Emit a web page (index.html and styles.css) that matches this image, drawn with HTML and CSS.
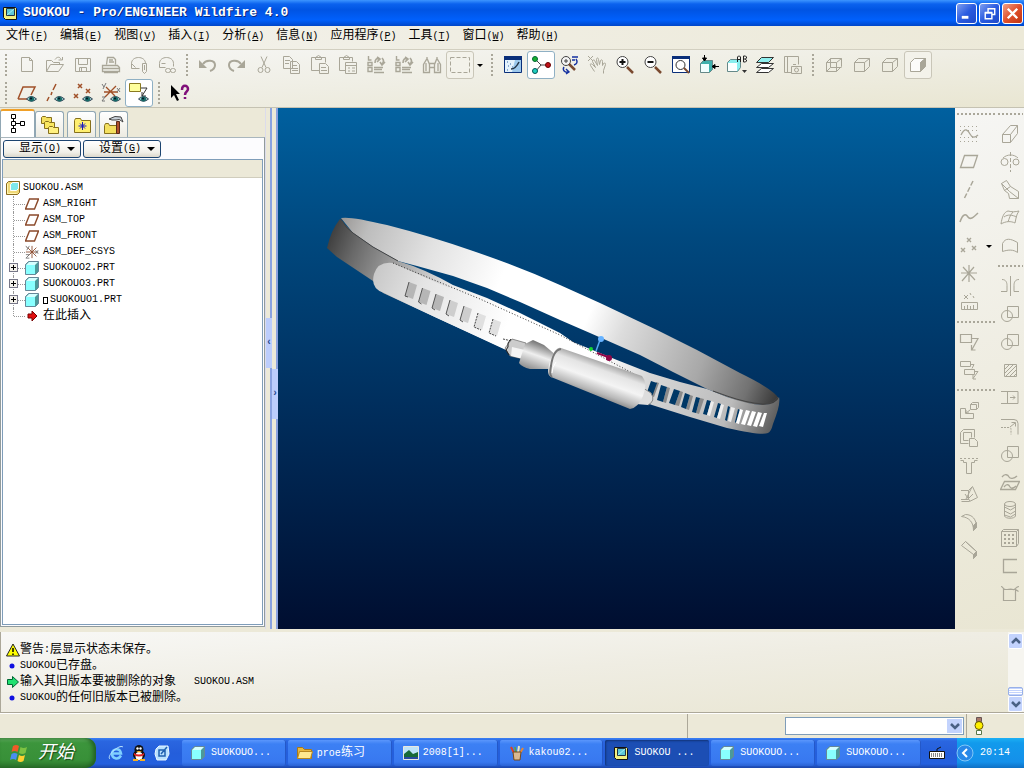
FILE: index.html
```html
<!DOCTYPE html>
<html lang="zh-CN">
<head>
  <meta charset="UTF-8">
  <meta name="viewport" content="width=device-width, initial-scale=1.0">
  <title>SUOKOU - Pro/ENGINEER Wildfire 4.0</title>
  <link rel="stylesheet" href="styles.css">
</head>
<body>
  <!-- icon set -->
  <svg class="defs" aria-hidden="true">
    <symbol id="eye" viewBox="0 0 20 20"><path d="M9.500 16q4.500-5 10 0q-5 4.500-10 0z" fill="#9cc" stroke="#345" /><circle cx="14.500" cy="16" r="2.500" fill="#176a68" stroke="none"/><circle cx="14" cy="15.500" r="1" fill="#012" stroke="none"/></symbol>
    <symbol id="asm" viewBox="0 0 14 14"><path d="M.5 2.500l2-2h11v11l-2 2h-11z" fill="#f0d878" stroke="#8a6a20"/><path d="M4.500 3.500l2-2h6v6l-2 2h-6z" fill="#7fe8ec" stroke="#fff"/><path d="M1.500 3v9.500h9" stroke="#fff6b0"/></symbol>
    <symbol id="app" viewBox="0 0 14 14"><path d="M.5 1.500h12l1 1v11h-11l-2-2z" fill="#f4f080" stroke="#111"/><path d="M3.500 2.500h8v7h-8z" fill="#5cc8d8" stroke="#234"/><path d="M4 9l7-6" stroke="#a8f0f4"/></symbol>
    <symbol id="prt" viewBox="0 0 14 14"><path d="M.5 3.500l3-3h10v10l-3 3h-10z" fill="#4b9a9a" stroke="#689"/><path d="M1 4h9v9h-9z" fill="#8ff" stroke="none"/><path d="M1 4l3-3h9l-3 3z" fill="#d5ffff" stroke="none"/></symbol>
    <symbol id="plane" viewBox="0 0 14 14"><path d="M.5 12l4-10h9l-4 10z" stroke="#8b4a2b" stroke-width="1.400"/></symbol>
    <symbol id="csys" viewBox="0 0 16 16"><path d="M8 1v14M1 8h14M3 3l10 10M13 3l-10 10" stroke="#8b4a2b"/><path d="M1 1l2 3M5 1l-3 5M12 6l3 4M15 6l-3 4M1 11h4l-4 4h4" stroke="#777"/></symbol>
    <symbol id="new" viewBox="0 0 20 20"><path d="M4.500 2.500h8l3 3v11h-11zM12.500 2.500v3h3"/></symbol>
    <symbol id="open" viewBox="0 0 20 20"><path d="M1.500 16.500v-11h5l2 2h6v2M1.500 16.500l4-7h13l-5 7zM10 4.500c2-3 5-3 6 0M17.500 2v3h-4"/></symbol>
    <symbol id="save" viewBox="0 0 20 20"><path d="M2.500 3.500h15v13h-15zM5.500 3.500v6h9v-6M6.500 16.500v-4h7v4M8.500 13v3"/></symbol>
    <symbol id="print" viewBox="0 0 20 20"><path d="M5.500 9.500l1-7h6l2 2v5M8 5h4M8 7h5M1.500 10.500h15l2 2v4h-17zM1.500 13.500h17M3 17.500h14" stroke-width="1.300"/></symbol>
    <symbol id="mail" viewBox="0 0 20 20"><path d="M2.500 13.500v-5c0-8 14-8 14 0M2.500 13.500h8M2.500 8.500l4 4M13.500 8.500h4v8l-2 2-2-2zM15.500 10v5"/></symbol>
    <symbol id="maillink" viewBox="0 0 20 20"><path d="M2.500 12.500v-4c0-8 14-8 14 0v3M2.500 12.500h6M4.500 8.500h4"/><rect x="8.500" y="13.500" width="5" height="4" rx="2"/><rect x="13.500" y="13.500" width="5" height="4" rx="2"/></symbol>
    <symbol id="undo" viewBox="0 0 20 20"><path d="M1 5v8h8z" fill="currentColor" stroke="none"/><path d="M5 9c3-5 12-4 12 1c0 3-2 5-5 6" stroke-width="2"/></symbol>
    <symbol id="redo" viewBox="0 0 20 20"><path d="M19 5v8h-8z" fill="currentColor" stroke="none"/><path d="M15 9c-3-5-12-4-12 1c0 3 2 5 5 6" stroke-width="2"/></symbol>
    <symbol id="cut" viewBox="0 0 20 20"><path d="M7 1.500l5 11M13 1.500l-5 11"/><circle cx="6.500" cy="15" r="2.500"/><circle cx="13.500" cy="15" r="2.500"/></symbol>
    <symbol id="copy" viewBox="0 0 20 20"><path d="M1.500 1.500h6l3 3v9h-9zM3 5.500h5M3 8.500h4M8.500 6.500h6l3 3v9h-9zM10 10.500h5M10 13.500h6M10 15.500h6"/></symbol>
    <symbol id="paste" viewBox="0 0 20 20"><path d="M9.500 15.500h-8v-13h14v5M5.500 4.500v-2l3-2 3 2v2zM9.500 8.500h6l3 3v7h-9zM11 12.500h5M11 15.500h6"/></symbol>
    <symbol id="pastes" viewBox="0 0 20 20"><path d="M7.500 15.500h-6v-13h13v4M5.500 4.500v-2l3-2 3 2v2zM7.500 7.500h11v11h-11zM7.500 10.500h11M10 13h2M14 13h3M10 16h2M14 16h3"/></symbol>
    <symbol id="regen" viewBox="0 0 20 20"><path d="M2.500 1v4h3M2 7.500h4v3h-4zM2 12.500h4v4h-4zM8 12.500h9M8 14.500h8M8 17.500h10" stroke-width="1.400"/><path d="M9 8c0-4 2-5 4-4M16 3c2 2 2 4 0 6M11 2l3 2-3 3M14 7l2 3 3-3" stroke-width="1.600"/></symbol>
    <symbol id="find" viewBox="0 0 20 20"><path d="M1.500 17.500v-8l3-5h1l2 5v8zM18.500 17.500v-8l-3-5h-1l-2 5v8zM7.500 8.500h5v4h-5zM4 8v8M16 8v8M5 2v2M15 2v2" stroke-width="1.300"/></symbol>
    <symbol id="select" viewBox="0 0 20 20"><rect x=".5" y="2.500" width="19" height="15" stroke-dasharray="4 2"/></symbol>
    <symbol id="repaint" viewBox="0 0 20 20"><path d="M1.500 1.500h17v16h-17z" fill="#9cc8ec" stroke="#0a2f7a"/><path d="M1 1h18v4h-18z" fill="#0a2f7a" stroke="none"/><path d="M2 5h10l-3 12h-7z" fill="#e4f2fc" stroke="none"/><path d="M8 14c4 0 6-3 8-7" stroke="#234" stroke-width="1.500"/><path d="M4 7h1M7 9h1M5 11h1M9 12h1M4 15h1" stroke="#36a"/></symbol>
    <symbol id="spin" viewBox="0 0 20 20"><path d="M4 4l6 6M4 17l6-7h7" stroke="#444"/><circle cx="4" cy="4" r="2.500" fill="#19b030" stroke="#063"/><circle cx="4" cy="16" r="2.500" fill="#20d0c0" stroke="#055"/><circle cx="17" cy="10" r="2.500" fill="#c01018" stroke="#600"/></symbol>
    <symbol id="orient" viewBox="0 0 20 20"><circle cx="7" cy="6" r="4.500" fill="#f4f4f4" stroke="#444"/><path d="M5 6h4M7 4v4" stroke="#444"/><path d="M10 9l6 6" stroke="#7a4a30" stroke-width="2.500"/><path d="M13 2h6M13 5h3M17 4c2 3 1 5-2 6M5 12c-2 3 1 6 4 5M7 14l3 3-3 2" stroke="#1430a0" stroke-width="1.400"/></symbol>
    <symbol id="pan" viewBox="0 0 20 20"><path d="M1 1l5 5M6 1l-5 5M7.500 16.500l-4-6c-1-2 1-2 2-1l3 3-3-6c0-2 2-2 2-1l3 5-1-6c0-2 2-2 2 0l1 5 1-4c1-1 2-1 2 1v4l1-2c2-1 2 0 2 1l-2 6v3"/></symbol>
    <symbol id="zoomin" viewBox="0 0 20 20"><circle cx="7.500" cy="7" r="5.500" fill="#fff" stroke="#444"/><path d="M4.500 7h6M7.500 4v6" stroke="#111" stroke-width="2"/><path d="M12 12l6 6" stroke="#7a4a30" stroke-width="2.500"/></symbol>
    <symbol id="zoomout" viewBox="0 0 20 20"><circle cx="7.500" cy="7" r="5.500" fill="#fff" stroke="#444"/><path d="M4.500 7h6" stroke="#111" stroke-width="2"/><path d="M12 12l6 6" stroke="#7a4a30" stroke-width="2.500"/></symbol>
    <symbol id="refit" viewBox="0 0 20 20"><path d="M1.500 1.500h17v16h-17z" fill="#fff" stroke="#0a2f7a"/><path d="M1 1h18v3h-18z" fill="#0a2f7a" stroke="none"/><circle cx="9.500" cy="10" r="4.500" stroke="#333"/><path d="M13 13l5 5" stroke="#7a4a30" stroke-width="2"/></symbol>
    <symbol id="views" viewBox="0 0 20 20"><path d="M1.500 8.500l3-3h9v9l-3 3h-9z" fill="#3fb0ac" stroke="#688"/><path d="M2 9h8v8h-8z" fill="#f2ffff" stroke="none"/><path d="M5.500 0v5M3.500 3l2 3 2-3zM20 11.500h-6M16 9.500l-3 2 3 2z" fill="#000" stroke="#000"/></symbol>
    <symbol id="named" viewBox="0 0 20 20"><path d="M.5 7.500l3-3h10v8l-3 4h-10z" fill="#8ee" stroke="#688"/><path d="M1 8h9v8h-9z" fill="#fbffff" stroke="none"/><path d="M10.500 7v-5l1-1h1l1 1v5M10.500 4.500h3M16.500 7v-6h2l1 1v1l-1 1h-2M18 4l1.500 1v1l-1 1h-2" stroke="#222"/><path d="M15 15h5l-2.500 3z" fill="#333" stroke="none"/></symbol>
    <symbol id="layers" viewBox="0 0 20 20"><path d="M1.500 17.500l5-4h12l-5 4z" fill="#fff" stroke="#333"/><path d="M1.500 12.500l5-4h12l-5 4z" fill="#fff" stroke="#333"/><path d="M1.500 7.500l5-5h12l-5 5z" fill="#8ff0f0" stroke="#333"/></symbol>
    <symbol id="viewmgr" viewBox="0 0 20 20"><path d="M8.500 17.500h-7v-16h14v8M4.500 1.500v16M8.500 11.500h10v7h-10zM10 9.500h3" /><circle cx="13.500" cy="15" r="2"/></symbol>
    <symbol id="wire" viewBox="0 0 20 20"><path d="M2.500 7.500h10v9h-10zM2.500 7.500l4-4h11l-5 4M17.500 3.500v8l-5 5M6.500 3.500v9h11M6.500 12.500l-4 4"/></symbol>
    <symbol id="box" viewBox="0 0 20 20"><path d="M2.500 7.500h10v9h-10zM2.500 7.500l4-4h11l-5 4M17.500 3.500v8l-5 5"/></symbol>
    <symbol id="shade" viewBox="0 0 20 20"><path d="M2.500 7.500l4-4h11l-5 4v9h-10z" fill="#fcfcfa"/><path d="M12.500 7.500l5-4v8l-5 5z" fill="currentColor"/></symbol>
    <symbol id="tplane" viewBox="0 0 20 20"><path d="M1 16l5-12h12l-4 8M1 16h9" stroke="#a05028" stroke-width="1.500"/><use href="#eye"/></symbol>
    <symbol id="taxis" viewBox="0 0 20 20"><path d="M11 1l-3 6M7 9l-1 3M4 14l-2 4" stroke="#a05028" stroke-width="1.500"/><use href="#eye"/></symbol>
    <symbol id="tpoint" viewBox="0 0 20 20"><path d="M5 1l4 4M9 1l-4 4M1 11l4 4M5 11l-4 4M13 6l4 4M17 6l-4 4" stroke="#a05028" stroke-width="1.500"/><use href="#eye"/></symbol>
    <symbol id="tcsys" viewBox="0 0 20 20"><path d="M3 9h14M5 4l9 9M15 3l-11 11" stroke="#a05028" stroke-width="1.300"/><path d="M1 1l2 3M5 0l-3 6M16 5l3 4M19 5l-3 4M1 14h3l-3 4h3" stroke="#777"/><use href="#eye"/></symbol>
    <symbol id="tnote" viewBox="0 0 20 20"><path d="M.5 .5h11v8h-11z" fill="#ffff9c" stroke="#8a7a20"/><path d="M12 5h6l-5 8M13 9v4h4" stroke="#333"/><use href="#eye"/></symbol>
    <symbol id="what" viewBox="0 0 20 20"><path d="M1 2v13l3-3 3 6 2-1-3-6h4z" fill="#000" stroke="none"/><path d="M12 7c0-6 6-5 6-1c0 3-3 2-3 6M15 14v2" stroke="#80107a" stroke-width="2.500"/></symbol>
    <symbol id="sketch" viewBox="0 0 20 20"><path d="M1 2.500h18M1 6.500h18M1 13.500h18M1 17.500h18" stroke-dasharray="1 3"/><path d="M2 11c4-8 7-5 9-1s5 4 8 1" stroke-width="1.300"/></symbol>
    <symbol id="dplane" viewBox="0 0 20 20"><path d="M1.500 15.500l4-12h13l-4 12z" stroke-width="1.300"/></symbol>
    <symbol id="daxis" viewBox="0 0 20 20"><path d="M14 1L5 19" stroke-width="1.500" stroke-dasharray="5 2"/></symbol>
    <symbol id="curve" viewBox="0 0 20 20"><path d="M1 14c3-9 6-8 8-5s5 1 10-4" stroke-width="1.500"/></symbol>
    <symbol id="points" viewBox="0 0 20 20"><path d="M8 2l4 4M12 2l-4 4M2 12l4 4M6 12l-4 4M13 10l4 4M17 10l-4 4" stroke-width="1.400"/></symbol>
    <symbol id="dcsys" viewBox="0 0 20 20"><path d="M10 1v17M2 9h16M4 3l12 13M15 3l-12 14" stroke-width="1.200"/></symbol>
    <symbol id="ruler" viewBox="0 0 20 20"><path d="M2.500 10.500h16v7h-16zM5.500 17v-3M8.500 17v-4M11.500 17v-3M14.500 17v-4M5 3l4 4M9 3l-4 4M11 1l1 2M14 4l1 2"/></symbol>
    <symbol id="annot" viewBox="0 0 20 20"><path d="M1.500 2.500h11v8h-11zM13 6.500h6l-6 11M12.500 13v5h4" stroke-width="1.200"/></symbol>
    <symbol id="annots" viewBox="0 0 20 20"><path d="M1.500 1.500h10v5h-10zM12 4.500h3l-2 4M5.500 9.500h10v5h-10zM16 11.500h3l-5 7M14 15v4h3"/></symbol>
    <symbol id="assem" viewBox="0 0 20 20"><path d="M1.500 8.500h5v5h8v5h-13zM11.500 4.500l2-2h6v5l-2 2h-6zM11.500 4.500h6v5M11 10l-4 3M7 10v3h3"/></symbol>
    <symbol id="create" viewBox="0 0 20 20"><path d="M9.500 15.500h-8v-11l3-3h11v8M4.500 4.500h8v5M4.500 4.500v8h5M10.500 10.500h5l3 3v5h-8z"/></symbol>
    <symbol id="tee" viewBox="0 0 20 20"><path d="M1.500 4.500h3v2h3v11M18.500 4.500h-3v2h-3v11M7.500 17.500h5"/><path d="M1 2.500h18" stroke-dasharray="2 2"/></symbol>
    <symbol id="draft" viewBox="0 0 20 20"><path d="M2 6.500h7.500v9h-7.500M9.500 6.500l4-4 5 11-8 4h-8M13 3l-6 12M6 10l5 7M9 15l5-5"/></symbol>
    <symbol id="round" viewBox="0 0 20 20"><path d="M2.500 4.500l4-2c7 0 11 5 11 13l-3 3c0-8-4-13-12-14z"/><path d="M14.500 18.500l3-3v-5l-3 3z" fill="currentColor"/></symbol>
    <symbol id="chamfer" viewBox="0 0 20 20"><path d="M2.500 5.500l4-4 11 10v4l-3 3v-4zM6.500 1.500v0l11 10-3 3"/><path d="M14.500 18.500l3-3v-4l-3 3z" fill="currentColor"/></symbol>
    <symbol id="extrude" viewBox="0 0 20 20"><path d="M2.500 10.500h8v8h-8zM2.500 10.500l8-9h7v8l-7 9M10.500 10.500l7-9"/></symbol>
    <symbol id="revolve" viewBox="0 0 20 20"><path d="M10.500 0v20" stroke-dasharray="4 2"/><circle cx="4.500" cy="10" r="3.500"/><circle cx="16" cy="10" r="3"/><path d="M3 6c4-4 11-4 15 0"/></symbol>
    <symbol id="blend" viewBox="0 0 20 20"><path d="M1.500 3.500l5-3 4 6 8 5v7h-9l-1-5-4-3zM1.500 3.500l8 8 9 7M10.500 6.500l-6 4"/></symbol>
    <symbol id="boundary" viewBox="0 0 20 20"><path d="M1 16c1-7 3-12 7-13c4 1 7 1 11 0c-3 4-3 8-4 12c-4-2-9-2-14 1zM4 9c4-3 8-2 13 0M13 4c-3 3-4 7-5 10"/></symbol>
    <symbol id="surf" viewBox="0 0 20 20"><path d="M2.500 15.500v-8c3-6 8-5 15-1v10c-4-3-9-3-15-1z"/></symbol>
    <symbol id="mirror" viewBox="0 0 20 20"><path d="M10.500 0v20M2 3.500c4 0 5 3 5 6v6h-6M19 3.500c-4 0-5 3-5 6v6h5"/></symbol>
    <symbol id="merge" viewBox="0 0 20 20"><path d="M7.500 2.500h11v11h-11z"/><circle cx="7" cy="12" r="5.500"/></symbol>
    <symbol id="hatch" viewBox="0 0 20 20"><path d="M4.500 4.500h12v12h-12zM5 9l4-4M5 13l8-8M6 16l10-10M10 16l6-6M14 16l2-2"/></symbol>
    <symbol id="extend" viewBox="0 0 20 20"><path d="M1 3.500h17v12h-17M7.500 3.500v12M10 9.500h5M13 7.500l2 2-2 2"/></symbol>
    <symbol id="offset" viewBox="0 0 20 20"><path d="M1 3.500h13q4 0 4 4v11"/><path d="M1 11.500h8q2 0 2 2v5" stroke-dasharray="2 1"/><path d="M10 11l5-4M11.500 6.500h4v4"/></symbol>
    <symbol id="wave" viewBox="0 0 20 20"><path d="M2 5c3-4 6-2 7 0s5 2 8-1M.5 17.500l4-8h15l-4 8zM4 15c3-4 5-2 6 0s4 1 6-1" stroke-width="1.300"/></symbol>
    <symbol id="cyl" viewBox="0 0 20 20"><ellipse cx="10" cy="4" rx="5.500" ry="2.500"/><path d="M4.500 4v12c1 3 10 3 11 0v-12M4.500 7l6 3 5-3M4.500 11l6 3 5-3M4.500 15l6 2 5-3"/></symbol>
    <symbol id="pattern" viewBox="0 0 20 20"><path d="M1.500 3.500l2-2h15v14l-2 3h-15zM1.500 3.500h15v15M16.500 3.500l2-2"/><path d="M4 7h2M8 7h2M12 7h2M4 11h2M8 11h2M12 11h2M4 15h2M8 15h2M12 15h2" stroke-width="2"/></symbol>
    <symbol id="edge" viewBox="0 0 20 20"><path d="M17 3.500h-13.500v13h13.500" stroke-width="1.300"/></symbol>
    <symbol id="flex" viewBox="0 0 20 20"><path d="M3.500 5.500h12v11h-12zM1 2.500c2 0 2 3 5 3s5-1 7 0 3-3 6-3M15.500 5.500l3 2" stroke-width="1.200"/></symbol>
    <symbol id="chevdown" viewBox="0 0 10 8"><path d="M1 2l4 4 4-4" stroke="#4a6185" stroke-width="2.500"/></symbol>
    <symbol id="chevup" viewBox="0 0 10 8"><path d="M1 6l4-4 4 4" stroke="#4a6185" stroke-width="2.500"/></symbol>
  </svg>

  <header class="titlebar">
    <svg class="ico14"><use href="#app"/></svg>
    <h1>SUOKOU - Pro/ENGINEER Wildfire 4.0</h1>
    <button class="win" aria-label="最小化"><svg viewBox="0 0 20 20"><path d="M5 14h7" stroke-width="3"/></svg></button>
    <button class="win" aria-label="还原"><svg viewBox="0 0 20 20"><path d="M5.500 9.500h7v6h-7zM5 9h8M8.500 9v-4h7v6h-3M8 5h8" stroke-width="1.500"/></svg></button>
    <button class="win close" aria-label="关闭"><svg viewBox="0 0 20 20"><path d="M5 5l10 10M15 5l-10 10" stroke-width="2.500"/></svg></button>
  </header>

  <nav class="menubar">
    <button>文件<span class="key">(<u>F</u>)</span></button>
    <button>编辑<span class="key">(<u>E</u>)</span></button>
    <button>视图<span class="key">(<u>V</u>)</span></button>
    <button>插入<span class="key">(<u>I</u>)</span></button>
    <button>分析<span class="key">(<u>A</u>)</span></button>
    <button>信息<span class="key">(<u>N</u>)</span></button>
    <button>应用程序<span class="key">(<u>P</u>)</span></button>
    <button>工具<span class="key">(<u>T</u>)</span></button>
    <button>窗口<span class="key">(<u>W</u>)</span></button>
    <button>帮助<span class="key">(<u>H</u>)</span></button>
  </nav>

  <div class="toolbars">
    <div class="toolbar">
      <span class="grip"></span>
      <button class="tool" aria-label="新建"><svg><use href="#new"/></svg></button>
      <button class="tool" aria-label="打开"><svg><use href="#open"/></svg></button>
      <button class="tool" aria-label="保存"><svg><use href="#save"/></svg></button>
      <button class="tool" aria-label="打印"><svg><use href="#print"/></svg></button>
      <button class="tool" aria-label="发送附件"><svg><use href="#mail"/></svg></button>
      <button class="tool" aria-label="发送链接"><svg><use href="#maillink"/></svg></button>
      <span class="grip"></span>
      <button class="tool" aria-label="撤消"><svg><use href="#undo"/></svg></button>
      <button class="tool" aria-label="重做"><svg><use href="#redo"/></svg></button>
      <button class="tool" aria-label="剪切"><svg><use href="#cut"/></svg></button>
      <button class="tool" aria-label="复制"><svg><use href="#copy"/></svg></button>
      <button class="tool" aria-label="粘贴"><svg><use href="#paste"/></svg></button>
      <button class="tool" aria-label="选择性粘贴"><svg><use href="#pastes"/></svg></button>
      <button class="tool" aria-label="再生"><svg><use href="#regen"/></svg></button>
      <button class="tool" aria-label="再生管理器"><svg><use href="#regen"/></svg></button>
      <button class="tool" aria-label="查找"><svg><use href="#find"/></svg></button>
      <button class="tool framed" aria-label="选取"><svg><use href="#select"/></svg></button>
      <button class="drop" aria-label="选取方式"></button>
      <span class="grip"></span>
      <button class="tool" aria-label="重画"><svg><use href="#repaint"/></svg></button>
      <button class="tool on" aria-label="旋转中心"><svg><use href="#spin"/></svg></button>
      <button class="tool" aria-label="定向模式"><svg><use href="#orient"/></svg></button>
      <button class="tool" aria-label="平移"><svg><use href="#pan"/></svg></button>
      <button class="tool" aria-label="放大"><svg><use href="#zoomin"/></svg></button>
      <button class="tool" aria-label="缩小"><svg><use href="#zoomout"/></svg></button>
      <button class="tool" aria-label="重新调整"><svg><use href="#refit"/></svg></button>
      <button class="tool" aria-label="重定向"><svg><use href="#views"/></svg></button>
      <button class="tool" aria-label="视图列表"><svg><use href="#named"/></svg></button>
      <button class="tool" aria-label="层"><svg><use href="#layers"/></svg></button>
      <button class="tool" aria-label="视图管理器"><svg><use href="#viewmgr"/></svg></button>
      <span class="grip"></span>
      <button class="tool" aria-label="线框"><svg><use href="#wire"/></svg></button>
      <button class="tool" aria-label="隐藏线"><svg><use href="#box"/></svg></button>
      <button class="tool" aria-label="无隐藏线"><svg><use href="#box"/></svg></button>
      <button class="tool framed" aria-label="着色"><svg><use href="#shade"/></svg></button>
    </div>
    <div class="toolbar">
      <span class="grip"></span>
      <button class="tool" aria-label="基准平面开关"><svg><use href="#tplane"/></svg></button>
      <button class="tool" aria-label="基准轴开关"><svg><use href="#taxis"/></svg></button>
      <button class="tool" aria-label="基准点开关"><svg><use href="#tpoint"/></svg></button>
      <button class="tool" aria-label="坐标系开关"><svg><use href="#tcsys"/></svg></button>
      <button class="tool on" aria-label="注释开关"><svg><use href="#tnote"/></svg></button>
      <span class="grip"></span>
      <button class="tool" aria-label="上下文帮助"><svg><use href="#what"/></svg></button>
    </div>
  </div>

  <main class="work">
    <aside class="navigator">
      <div class="tabs">
        <button class="tab active" aria-label="模型树"><svg viewBox="0 0 20 20"><path d="M3.500 1.500h4v4h-4zM3.500 8.500h4v4h-4zM3.500 15.500h4v4h-4zM12.500 8.500h4v4h-4zM5.500 6v2M5.500 13v2M8 10.500h4" stroke="#000"/></svg></button>
        <button class="tab" aria-label="文件夹浏览器"><svg viewBox="0 0 20 20"><path d="M1.500 2.500l1-1h3l1 1h5v6h-10z" fill="#f4e060" stroke="#86701c"/><path d="M4.500 7.500l1-1h3l1 1h5v6h-10z" fill="#fae860" stroke="#86701c"/><path d="M8.500 12.500l1-1h3l1 1h5v6h-10z" fill="#fff080" stroke="#86701c"/></svg></button>
        <button class="tab" aria-label="收藏夹"><svg viewBox="0 0 20 20"><path d="M2.500 5.500l1-2h5l1 2h9v12h-16z" fill="#ffef70" stroke="#86701c"/><path d="M10.500 7v8M6.500 11h8M8 8.500l5 5M13 8.500l-5 5" stroke="#1818c0"/></svg></button>
        <button class="tab" aria-label="连接"><svg viewBox="0 0 20 20"><path d="M.5 10.500l1-2h3l1 2h7v8h-12z" fill="#f4e060" stroke="#86701c"/><path d="M5 4q6-4 12-2l2 5q-4-4-7-2h-4z" fill="#c8d0d8" stroke="#444"/><path d="M12.500 6.500h3v12h-3z" fill="#b0502c" stroke="#5a2a18"/></svg></button>
      </div>
      <div class="panel">
        <div class="panel-buttons">
          <button>显示<span class="key">(<u>O</u>)</span><i class="caret"></i></button>
          <button>设置<span class="key">(<u>G</u>)</span><i class="caret"></i></button>
        </div>
        <div class="tree">
          <div class="tree-head"></div>
          <div class="root"><svg class="ico14"><use href="#asm"/></svg><span>SUOKOU.ASM</span></div>
          <ul>
            <li><span class="branch"></span><svg class="ico14"><use href="#plane"/></svg><span>ASM_RIGHT</span></li>
            <li><span class="branch"></span><svg class="ico14"><use href="#plane"/></svg><span>ASM_TOP</span></li>
            <li><span class="branch"></span><svg class="ico14"><use href="#plane"/></svg><span>ASM_FRONT</span></li>
            <li><span class="branch"></span><svg class="ico14"><use href="#csys"/></svg><span>ASM_DEF_CSYS</span></li>
            <li><span class="branch"><button class="plus" aria-label="展开"></button></span><svg class="ico14"><use href="#prt"/></svg><span>SUOKOUO2.PRT</span></li>
            <li><span class="branch"><button class="plus" aria-label="展开"></button></span><svg class="ico14"><use href="#prt"/></svg><span>SUOKOUO3.PRT</span></li>
            <li><span class="branch"><button class="plus" aria-label="展开"></button></span><svg class="ico14"><use href="#prt"/></svg><i class="mark"></i><span>SUOKOUO1.PRT</span></li>
            <li><span class="branch"></span><svg class="ico14" viewBox="0 0 14 14"><path d="M3 5h4v-3l5 5-5 5v-3h-4z" fill="#e01010" stroke="#700"/></svg><span class="zh">在此插入</span></li>
          </ul>
        </div>
      </div>
    </aside>

    <div class="splitter">
      <div class="rail"><button aria-label="收起">‹</button></div>
      <div class="rail right"><button aria-label="展开">›</button></div>
    </div>

    <section class="viewport">
      <svg viewBox="278 108 677 521" role="img" aria-label="模型">
        <defs>
          <linearGradient id="backBand" gradientUnits="userSpaceOnUse" x1="341" y1="220" x2="779" y2="400">
            <stop offset="0" stop-color="#9a9896"/><stop offset=".06" stop-color="#bdbdbd"/><stop offset=".2" stop-color="#e2e2e2"/><stop offset=".36" stop-color="#fff"/><stop offset=".56" stop-color="#fff"/><stop offset=".64" stop-color="#dcdcdc"/><stop offset=".82" stop-color="#a8a8a8"/><stop offset=".93" stop-color="#727272"/><stop offset="1" stop-color="#333"/>
          </linearGradient>
          <linearGradient id="frontBand" gradientUnits="userSpaceOnUse" x1="328" y1="235" x2="779" y2="415">
            <stop offset="0" stop-color="#3c3c3c"/><stop offset=".06" stop-color="#686868"/><stop offset=".14" stop-color="#999"/><stop offset=".28" stop-color="#ececec"/><stop offset=".4" stop-color="#fff"/><stop offset=".62" stop-color="#fff"/><stop offset=".72" stop-color="#d8d8d8"/><stop offset=".9" stop-color="#bbb"/><stop offset="1" stop-color="#5a5a5a"/>
          </linearGradient>
          <linearGradient id="tongue" gradientUnits="userSpaceOnUse" x1="373" y1="275" x2="505" y2="330">
            <stop offset="0" stop-color="#c8c8c8"/><stop offset=".35" stop-color="#e4e4e4"/><stop offset="1" stop-color="#fff"/>
          </linearGradient>
          <linearGradient id="barrel" gradientUnits="userSpaceOnUse" x1="607" y1="360" x2="592" y2="402">
            <stop offset="0" stop-color="#8c8c8c"/><stop offset=".25" stop-color="#e4e4e4"/><stop offset=".5" stop-color="#f4f4f4"/><stop offset=".75" stop-color="#b8b8b8"/><stop offset="1" stop-color="#5c5c5c"/>
          </linearGradient>
          <linearGradient id="cone" gradientUnits="userSpaceOnUse" x1="542" y1="343" x2="532" y2="371">
            <stop offset="0" stop-color="#707070"/><stop offset=".45" stop-color="#efefef"/><stop offset="1" stop-color="#8a8a8a"/>
          </linearGradient>
        </defs>
        <!-- far side of the band -->
        <path fill="url(#backBand)" d="M341 218Q350 216 387 225Q430 236 473 251Q520 267 560 285L600 303L657 330L697 350L740 373Q775 390 779 399Q776 405 763 405Q747 405 727 397L707 389L673 372L640 355L590 333L560 320L520 302L487 288L453 276L417 266L398 261L373 247L353 233z"/>
        <!-- near side of the band -->
        <path fill="url(#frontBand)" d="M340 219L353 233L373 247L398 261Q425 269 453 285L487 298L520 313L560 333L573 342L617 360L650 373L680 382L707 389L727 397Q747 404 763 405Q777 404 779 397Q781 404 773 424Q771 432 768 433Q762 436 727 428L690 417L652 405L505 349L437 318L383 293L373 281L337 257L327 248Q331 230 340 219z"/>
        <path fill="none" stroke="#444" d="M341 219Q345 228 353 233L373 247L398 261M713 391L727 396Q747 403 763 404Q775 403 778 397"/>
        <path fill="url(#tongue)" d="M393 263Q378 261 374 274Q370 289 384 293L437 318L506 350L560 350L573 342L480 302z"/>
        <path fill="none" stroke="#333" stroke-dasharray="1 2" d="M393 263L480 299L560 335L640 377"/>
        <path fill="#b6b6b6" d="M409 282l8 3-4 14-8-3zM422.500 288l8 3-4 14-8-3zM436 294l8 3-4 14-8-3z"/>
        <path fill="#cecece" d="M450 300l8 3-4 14-8-3zM464 306l8 3-4 14-8-3z"/>
        <path fill="#e0e0e0" d="M478 313l8 3-4 14-8-3zM493 319l8 3-4 14-8-3z"/>
        <path fill="none" stroke="#555" d="M409 282l-4 14 3 1M422.500 288l-4 14 3 2M436 294l-4 14 3 2M450 300l-4 14 3 2M464 306l-4 14 3 2"/>
        <path fill="none" stroke="#444" stroke-dasharray="2 1" d="M478 313l-4 14 7 3M493 319l-4 14 7 3M503 339l9 2"/>
        <path fill="#8a8a8a" d="M656 382l3 1-5 14-3-1zM667 387l3 1-4 15-3-1zM680 391l3 1-4 14-4-1zM690 395l3 1-4 14-3-1zM700 398l4 1-5 15-3-1z"/>
        <path fill="#003866" d="M651 381l6 2-5 14-6-2zM661 385l6 2-4 15-6-2zM674 389l6 2-5 14-6-2zM685 393l5 2-4 14-5-2zM696 397l4 1-4 15-4-1zM707 400l4 1-4 14-4-1zM718 403l3 1-4 14-3-1zM728 406l2 1-3 14-2-1zM738 409l2 1-4 13-1-1z"/>
        <path fill="#ededed" d="M711 401l3 1-4 14-3-1zM721 404l3 1-4 14-3-1zM731 407l4 1-4 14-3-1z"/>
        <path fill="#fff" d="M740 409l3 1-4 14-3-1zM746 410l4 1-5 14-4-1zM752 411l4 1-5 14-4-1zM758 412l4 1-5 14-4-1zM764 413l3 0-4 14-4-1z"/>
        <!-- screw and housing -->
        <path fill="#ccc" stroke="#666" stroke-width=".7" d="M505 348L512 339L526 343L523 359L510 356z"/>
        <path fill="#f4f4f4" d="M512 347l13 3-2 9-12-3z"/>
        <path fill="none" stroke="#222" d="M511 339l-3 4v4l-2 3 3 5"/>
        <path fill="url(#cone)" d="M525 344L533 340L544 345L557 356L555 368L551 369L530 369Q522 367 519 363z"/>
        <path fill="#ddd" d="M643 387L651 393Q656 401 648 405L636 404z"/>
        <path fill="none" stroke="#888" d="M643 388L651 393Q656 401 648 405"/>
        <path fill="url(#barrel)" d="M561 348L642 376Q648 383 643 396Q638 408 630 409L551 377Q545 374 551 359Q556 346 561 348z"/>
        <path fill="none" stroke="#777" stroke-width="2" d="M561 349Q553 350 551 366Q549 375 552 377"/>
        <path fill="none" stroke="#fff" d="M556 362q-4 5-4 11"/>
        <!-- spin centre -->
        <path fill="none" stroke="#55aaf4" stroke-width="1.500" d="M600 340L596 351"/>
        <path fill="none" stroke="#900848" stroke-width="2" d="M597 353L608 357"/>
        <path fill="none" stroke="#fff" d="M591 350L596 353"/>
        <circle cx="601" cy="339" r="3" fill="#66b2ff"/>
        <circle cx="591" cy="349" r="2" fill="#18d830"/>
        <circle cx="609" cy="358" r="3" fill="#900848"/>
      </svg>
    </section>

    <div class="sidebars">
      <div class="sidebar">
        <span class="grip wide"></span>
        <button class="tool" aria-label="草绘"><svg><use href="#sketch"/></svg></button>
        <button class="tool" aria-label="平面"><svg><use href="#dplane"/></svg></button>
        <button class="tool" aria-label="轴"><svg><use href="#daxis"/></svg></button>
        <button class="tool" aria-label="曲线"><svg><use href="#curve"/></svg></button>
        <div class="split-tool">
          <button class="tool" aria-label="点"><svg><use href="#points"/></svg></button>
          <button class="drop" aria-label="点类型"></button>
        </div>
        <button class="tool" aria-label="坐标系"><svg><use href="#dcsys"/></svg></button>
        <button class="tool" aria-label="分析特征"><svg><use href="#ruler"/></svg></button>
        <span class="grip wide"></span>
        <button class="tool" aria-label="注释"><svg><use href="#annot"/></svg></button>
        <button class="tool" aria-label="注释传播"><svg><use href="#annots"/></svg></button>
        <span class="grip wide"></span>
        <button class="tool" aria-label="装配"><svg><use href="#assem"/></svg></button>
        <button class="tool" aria-label="创建"><svg><use href="#create"/></svg></button>
        <button class="tool" aria-label="孔"><svg><use href="#tee"/></svg></button>
        <button class="tool" aria-label="拔模"><svg><use href="#draft"/></svg></button>
        <button class="tool" aria-label="倒圆角"><svg><use href="#round"/></svg></button>
        <button class="tool" aria-label="倒角"><svg><use href="#chamfer"/></svg></button>
      </div>
      <div class="sidebar narrow">
        <span class="grip wide"></span>
        <button class="tool" aria-label="拉伸"><svg><use href="#extrude"/></svg></button>
        <button class="tool" aria-label="旋转"><svg><use href="#revolve"/></svg></button>
        <button class="tool" aria-label="混合"><svg><use href="#blend"/></svg></button>
        <button class="tool" aria-label="边界混合"><svg><use href="#boundary"/></svg></button>
        <button class="tool" aria-label="造型"><svg><use href="#surf"/></svg></button>
        <span class="grip wide"></span>
        <button class="tool" aria-label="镜像"><svg><use href="#mirror"/></svg></button>
        <button class="tool" aria-label="合并"><svg><use href="#merge"/></svg></button>
        <button class="tool" aria-label="修剪"><svg><use href="#merge"/></svg></button>
        <button class="tool" aria-label="填充"><svg><use href="#hatch"/></svg></button>
        <button class="tool" aria-label="延伸"><svg><use href="#extend"/></svg></button>
        <button class="tool" aria-label="偏移"><svg><use href="#offset"/></svg></button>
        <button class="tool" aria-label="相交"><svg><use href="#merge"/></svg></button>
        <button class="tool" aria-label="投影"><svg><use href="#wave"/></svg></button>
        <button class="tool" aria-label="包络"><svg><use href="#cyl"/></svg></button>
        <button class="tool" aria-label="阵列"><svg><use href="#pattern"/></svg></button>
        <button class="tool" aria-label="加厚"><svg><use href="#edge"/></svg></button>
        <button class="tool" aria-label="实体化"><svg><use href="#flex"/></svg></button>
      </div>
    </div>
  </main>

  <section class="messages">
    <div class="log">
      <p class="zh"><svg viewBox="0 0 14 14"><path d="M7 1L13.500 13H.5z" fill="#ff0" stroke="#222"/><path d="M7 5v4M7 10.500v1.500" stroke="#000" stroke-width="1.500"/></svg>警告<span class="lat">:</span>层显示状态未保存。</p>
      <p class="zh"><svg viewBox="0 0 14 14"><circle cx="6" cy="7" r="2.500" fill="#1010e0" stroke="none"/></svg><span class="lat">SUOKOU</span>已存盘。</p>
      <p class="zh"><svg viewBox="0 0 14 14"><path d="M1.500 4.500h5v-3l6 5.500-6 5.500v-3h-5z" fill="#20e070" stroke="#063"/></svg>输入其旧版本要被删除的对象<span class="lat answer">SUOKOU.ASM</span></p>
      <p class="zh"><svg viewBox="0 0 14 14"><circle cx="6" cy="7" r="2.500" fill="#1010e0" stroke="none"/></svg><span class="lat">SUOKOU</span>的任何旧版本已被删除。</p>
    </div>
    <div class="scrollbar">
      <button aria-label="向上"><svg><use href="#chevup"/></svg></button>
      <span class="thumb"></span>
      <button aria-label="向下"><svg><use href="#chevdown"/></svg></button>
    </div>
  </section>

  <footer class="statusbar">
    <div class="status-text"></div>
    <div class="filter">
      <select aria-label="选取过滤器"><option></option></select>
      <svg><use href="#chevdown"/></svg>
    </div>
    <div class="lamp"><svg viewBox="0 0 12 20"><path d="M3.500 1.500h5v4h-5z" fill="#a87868" stroke="#655"/><circle cx="6" cy="9.500" r="4" fill="#fff000" stroke="#665500"/><path d="M3.500 14.500h5v4h-5z" fill="#fff" stroke="#587848"/></svg></div>
  </footer>

  <div class="taskbar">
    <button class="start">
      <svg viewBox="0 0 20 18"><path d="M3 2q3-2 6 0l-1.500 6q-3-2-6 0z" fill="#f05a28"/><path d="M10.500 3q3 2 6.500 0l-1.500 6q-3 2-6.500 0z" fill="#7dc242"/><path d="M1.500 10q3-2 6 0l-1.500 6q-3-2-6 0z" fill="#4a8ef0"/><path d="M9 11q3 2 6 0l-1.500 6q-3 2-6 0z" fill="#ffd030"/></svg>
      <span>开始</span>
    </button>
    <div class="quick">
      <button aria-label="Internet Explorer"><svg viewBox="0 0 16 16"><path d="M13 10.500c-3 5-9 3-9-2s8-6 9 0h-8" stroke="#7fd0ff" stroke-width="2.500"/><path d="M2 14c-4-3 9-15 13-12" stroke="#bfe8ff"/></svg></button>
      <button aria-label="QQ"><svg viewBox="0 0 16 16"><ellipse cx="8" cy="10" rx="6" ry="5" fill="#111"/><circle cx="8" cy="4.500" r="4.500" fill="#111"/><ellipse cx="8" cy="11" rx="3.500" ry="4" fill="#fff"/><path d="M3 8q5 3 10 0v2q-5 3-10 0z" fill="#e02020"/><circle cx="6.500" cy="3.500" r="1.200" fill="#fff"/><circle cx="9.500" cy="3.500" r="1.200" fill="#fff"/><path d="M5 6h6l-3 1.500zM2 14h5v2h-5zM9 14h5v2h-5z" fill="#f8b020"/></svg></button>
      <button aria-label="显示桌面"><svg viewBox="0 0 16 16"><path d="M2 4l3-3h9l1 8-3 6h-9l-2-6z" fill="#b8e0ff" stroke="#e8f6ff"/><path d="M5 5h6v6h-6zM7 9l6-7" stroke="#2060b0" stroke-width="1.500"/></svg></button>
    </div>
    <div class="tasks">
      <button><svg class="ico14"><use href="#prt"/></svg>SUOKOUO...</button>
      <button><svg viewBox="0 0 16 16"><path d="M.5 13.500v-11h5l2 2h7v9z" fill="#e8b840" stroke="#a87818"/><path d="M.5 13.500l2-7h13l-2 7z" fill="#ffe890" stroke="#b88820"/></svg><span>proe<span class="zh">练习</span></span></button>
      <button><svg viewBox="0 0 16 16"><path d="M.5 1.500h15v13h-15z" fill="#bde4fa" stroke="#e8e8e0"/><path d="M1 9l5-4 4 4 5-2v7h-14z" fill="#186a38"/><path d="M1 12h14v2h-14z" fill="#284aa0"/></svg>2008[1]...</button>
      <button><svg viewBox="0 0 16 16"><path d="M5 8L2 2" stroke="#e04020" stroke-width="2"/><path d="M7 8L6 2" stroke="#58a838" stroke-width="1.500"/><path d="M9 8l1-7" stroke="#e8e8c0" stroke-width="2"/><path d="M11 8l3-5" stroke="#e88830" stroke-width="2"/><path d="M4 7h8l-1 8h-6z" fill="#d8b890" stroke="#764818"/></svg>kakou02...</button>
      <button class="current"><svg class="ico14"><use href="#app"/></svg>SUOKOU ...</button>
      <button><svg class="ico14"><use href="#prt"/></svg>SUOKOUO...</button>
      <button><svg class="ico14"><use href="#prt"/></svg>SUOKOUO...</button>
    </div>
    <button class="ime" aria-label="输入法"><svg viewBox="0 0 16 16"><path d="M.5 6.500h15v7h-15z" fill="#fff" stroke="#111"/><path d="M2 9h12M2 11h12" stroke="#111" stroke-dasharray="1 1"/><path d="M8 6V4l4-2" stroke="#111"/></svg></button>
    <div class="tray">
      <button class="expand" aria-label="显示隐藏的图标"><svg viewBox="0 0 18 18"><circle cx="9" cy="9" r="8" fill="#2888e8" stroke="#80c8f8"/><path d="M11 5L7 9l4 4" stroke="#fff" stroke-width="2"/></svg></button>
      <time>20:14</time>
    </div>
  </div>
</body>
</html>
```
FILE: styles.css
```css
* {
  box-sizing: border-box;
}
body {
  margin: 0;
  height: 100vh;
  display: flex;
  flex-direction: column;
  overflow: hidden;
  background: #ece9d8;
  color: #000;
  font-family: "Liberation Mono", "Noto Sans CJK SC", monospace;
  font-size: 10px;
  line-height: 16px;
}
button {
  margin: 0;
  padding: 0;
  border: 0;
  background: none;
  color: inherit;
  font: inherit;
}
svg {
  display: block;
  flex: none;
  fill: none;
  stroke: currentColor;
}
.defs {
  position: absolute;
  width: 0;
  height: 0;
}
.zh {
  font-size: 12px;
}
.key,
.lat {
  font-size: 10px;
}
.ico14 {
  width: 14px;
  height: 14px;
}

/* title bar */
.titlebar {
  display: flex;
  align-items: center;
  height: 26px;
  padding: 0 1px 0 3px;
  gap: 2px;
  color: #fff;
  background: linear-gradient(#3d95ff 0, #0b62ee 4px, #0054e3 10px, #0060fc 20px, #0046c8 26px);
}
.titlebar h1 {
  flex: 1;
  margin: 0 0 0 4px;
  font-size: 13px;
  font-weight: bold;
  text-shadow: 1px 1px #0a2a80;
}
.win {
  width: 21px;
  height: 21px;
  border: 1px solid #fff;
  border-radius: 3px;
  background: linear-gradient(135deg, #7f9ff0, #2a5be0 50%, #1f49c8);
}
.win.close {
  background: linear-gradient(135deg, #f0a088, #e0502c 50%, #c03410);
}

/* menu */
.menubar {
  display: flex;
  align-items: center;
  gap: 12px;
  height: 24px;
  padding: 0 6px 2px;
  border-bottom: 1px solid #d2cfc0;
  background: linear-gradient(to right, #f3f2ec, #ece9d8);
  font-size: 12px;
}

/* toolbars */
.toolbars {
  padding-top: 1px;
  border-bottom: 1px solid #c5c2b2;
  background: linear-gradient(to bottom right, #f6f6f4, #efeee4 50%, #e9e6d2);
}
.toolbar {
  display: flex;
  height: 28px;
}
.grip {
  display: block;
  width: 13px;
  margin: 3px 0;
  background: repeating-linear-gradient(#aaa79a 0 2px, transparent 2px 4px) 5px 0 / 2px 100% no-repeat;
}
.grip.wide {
  width: auto;
  height: 12px;
  margin: 0 1px 0 2px;
  background: repeating-linear-gradient(to right, #aaa79a 0 2px, transparent 2px 4px) 0 5px / 100% 2px no-repeat;
}
.tool {
  display: flex;
  flex: none;
  align-items: center;
  justify-content: center;
  width: 28px;
  height: 28px;
  color: #a9a698;
}
.tool svg {
  width: 20px;
  height: 20px;
}
.tool.framed,
.tool.on {
  border: 1px solid #c9c6b8;
  border-radius: 3px;
}
.tool.framed {
  background: #f3f2ea;
}
.tool.on {
  border-color: #8fb0c4;
  background: #fff;
}
.drop {
  display: flex;
  align-items: center;
  justify-content: center;
  width: 12px;
}
.drop::before,
.caret {
  content: "";
  border: 3px solid transparent;
  border-top-color: #000;
  border-bottom-width: 0;
}

/* main area */
.work {
  display: flex;
  flex: 1;
  min-height: 0;
}
.navigator {
  display: flex;
  flex-direction: column;
  width: 265px;
  padding-top: 1px;
}
.tabs {
  display: flex;
  align-items: flex-end;
  gap: 3px;
  height: 28px;
}
.tab {
  display: flex;
  align-items: center;
  justify-content: center;
  width: 29px;
  height: 26px;
  border: 1px solid #91a7b4;
  border-bottom: 0;
  border-radius: 3px 3px 0 0;
  background: linear-gradient(#fff, #edebe2);
}
.tab svg {
  width: 20px;
  height: 20px;
}
.tab.active {
  width: 35px;
  height: 28px;
  margin-right: -3px;
  padding-bottom: 3px;
  border-top: 2px solid #f0a028;
  background: #fff;
}
.panel {
  display: flex;
  flex: 1;
  flex-direction: column;
  margin-bottom: 2px;
  border: 1px solid #919b9c;
  border-top-color: #a9b6bd;
  background: #fcfcfe;
}
.panel-buttons {
  display: flex;
  gap: 2px;
  padding: 2px 2px 1px;
}
.panel-buttons button {
  display: flex;
  align-items: center;
  justify-content: center;
  width: 78px;
  height: 18px;
  padding-left: 10px;
  border: 1px solid #1c4470;
  border-radius: 3px;
  background: linear-gradient(#fff, #f0efe8 70%, #dcd8cc);
  font-size: 12px;
}
.caret {
  margin-left: 6px;
  border-width: 4px 4px 0;
}
.tree {
  flex: 1;
  margin: 0 1px 1px;
  border: 1px solid #7f9db9;
  background: #fff;
}
.tree-head {
  height: 18px;
  margin-bottom: 2px;
  border-bottom: 1px solid #d0cdbd;
  background: #ece9d8;
}
.root,
.tree li {
  display: flex;
  align-items: center;
  height: 16px;
}
.root {
  gap: 3px;
  padding-left: 3px;
}
.tree ul {
  margin: 0;
  padding: 0 0 0 10px;
  list-style: none;
}
.tree li .ico14 {
  margin-right: 4px;
}
.branch {
  position: relative;
  width: 12px;
  height: 16px;
  border-left: 1px dotted #999;
}
.branch::before {
  content: "";
  display: block;
  height: 8px;
  border-bottom: 1px dotted #999;
}
.tree li:last-child .branch {
  height: 8px;
  align-self: flex-start;
}
.plus {
  position: absolute;
  left: -5px;
  top: 3px;
  width: 9px;
  height: 9px;
  border: 1px solid #778;
  background:
    linear-gradient(#000, #000) 1px 3px / 5px 1px no-repeat,
    linear-gradient(#000, #000) 3px 1px / 1px 5px no-repeat,
    #f4f2ec;
}
.mark {
  width: 5px;
  height: 7px;
  margin-right: 2px;
  border: 1px solid #000;
}

.splitter {
  display: flex;
  width: 13px;
  padding-left: 1px;
  background: #dcdcec;
}
.rail {
  display: flex;
  flex: 1;
  flex-direction: column;
  justify-content: center;
  padding-bottom: 52px;
  border-right: 2px solid #8aa2e0;
  background: #ece9d8;
}
.rail.right {
  padding: 50px 0 0;
}
.rail button {
  height: 50px;
  margin-right: -2px;
  background: #bccdfc;
  color: #24468c;
  font-weight: bold;
}

.viewport {
  flex: 1;
  min-width: 0;
  background: linear-gradient(#00609f, #00487e 25%, #002c5a 60%, #000e30);
}
.viewport svg {
  width: 100%;
  height: 100%;
  stroke: none;
}

.sidebars {
  display: flex;
  width: 69px;
  background: linear-gradient(160deg, #f6f6f4, #efede2 50%, #e9e6d3);
}
.sidebar {
  width: 41px;
}
.sidebar.narrow {
  width: 28px;
}
.split-tool {
  display: flex;
}

/* message log */
.messages {
  display: flex;
  height: 81px;
  margin-top: 3px;
  border-left: 1px solid #aca899;
  border-bottom: 1px solid #aca899;
  background: linear-gradient(to bottom right, #f8f8f6, #efede3 50%, #e9e6d3);
}
.log {
  flex: 1;
  padding: 10px 6px 0 5px;
}
.log p {
  display: flex;
  align-items: center;
  height: 16px;
  margin: 0;
}
.log svg {
  width: 14px;
  height: 14px;
}
.answer {
  margin-left: 18px;
}
.scrollbar {
  display: flex;
  flex-direction: column;
  width: 16px;
  padding: 1px 1px 0 0;
  background: #f6f5f0;
}
.scrollbar button {
  display: flex;
  align-items: center;
  justify-content: center;
  height: 16px;
  border: 1px solid #fff;
  border-radius: 2px;
  background: #c3d3fd;
}
.scrollbar svg,
.filter svg {
  width: 10px;
  height: 8px;
}
.thumb {
  height: 9px;
  margin-top: auto;
  border: 1px solid #98b0e8;
  border-radius: 2px;
  background: repeating-linear-gradient(#c3d3fd 0 1px, #fff 1px 2px);
}

.statusbar {
  display: flex;
  height: 25px;
  border-top: 1px solid #fff;
}
.status-text {
  width: 67.2%;
  border-right: 1px solid #aca899;
}
.filter {
  position: relative;
  display: flex;
  flex: 1;
  align-items: center;
  justify-content: flex-end;
  padding-right: 2px;
  border-right: 1px solid #aca899;
}
.filter select {
  width: 179px;
  height: 18px;
  border: 1px solid #7f9db9;
  border-radius: 0;
  background: linear-gradient(#c3d3fd, #c3d3fd) right 1px center / 15px 14px no-repeat #fff;
  appearance: none;
}
.filter svg {
  position: absolute;
  right: 6px;
}
.lamp {
  width: 57px;
  padding: 2px 6px;
}
.lamp svg {
  width: 12px;
  height: 20px;
}

/* task bar */
.taskbar {
  display: flex;
  height: 30px;
  color: #fff;
  background: linear-gradient(#3a80f4 0, #2a66e0 3px, #245edb 15px, #2460de 26px, #1c46a8 30px);
}
.taskbar svg {
  width: 16px;
  height: 16px;
  stroke: none;
}
.start {
  display: flex;
  align-items: center;
  gap: 8px;
  width: 96px;
  padding-left: 10px;
  border-radius: 0 10px 10px 0;
  background: linear-gradient(#62b062 0, #3c953c 5px, #389038 22px, #2a702a 30px);
  box-shadow: inset -3px 0 4px #226022;
  font-size: 18px;
  font-style: italic;
  text-shadow: 1px 1px 1px #184818;
}
.taskbar .start svg {
  width: 20px;
  height: 18px;
}
.quick {
  display: flex;
  align-items: center;
  gap: 7px;
  width: 86px;
  padding-left: 12px;
}
.tasks {
  display: flex;
  flex: 1;
  gap: 2px;
  padding: 2px 0 2px;
}
.tasks button {
  display: flex;
  flex: 1;
  align-items: center;
  gap: 4px;
  padding-left: 9px;
  border-radius: 2px;
  background: linear-gradient(#5a96fc, #3c80f4 4px, #3878f0 22px, #2a62d4);
  box-shadow: inset -1px 0 #2458c8;
}
.tasks .ico14 {
  width: 14px;
  height: 14px;
  margin-right: 2px;
}
.tasks button.current {
  background: #1c4eb4;
  box-shadow: inset 1px 1px 2px #123478;
}
.ime {
  width: 36px;
  padding-left: 8px;
}
.tray {
  display: flex;
  align-items: center;
  gap: 6px;
  width: 67px;
  background: linear-gradient(#1cb0f4 0, #129aec 5px, #1490ea 24px, #0e70c4);
}
.tray .expand {
  margin-left: -1px;
}
.taskbar .expand svg {
  width: 18px;
  height: 18px;
}
```
